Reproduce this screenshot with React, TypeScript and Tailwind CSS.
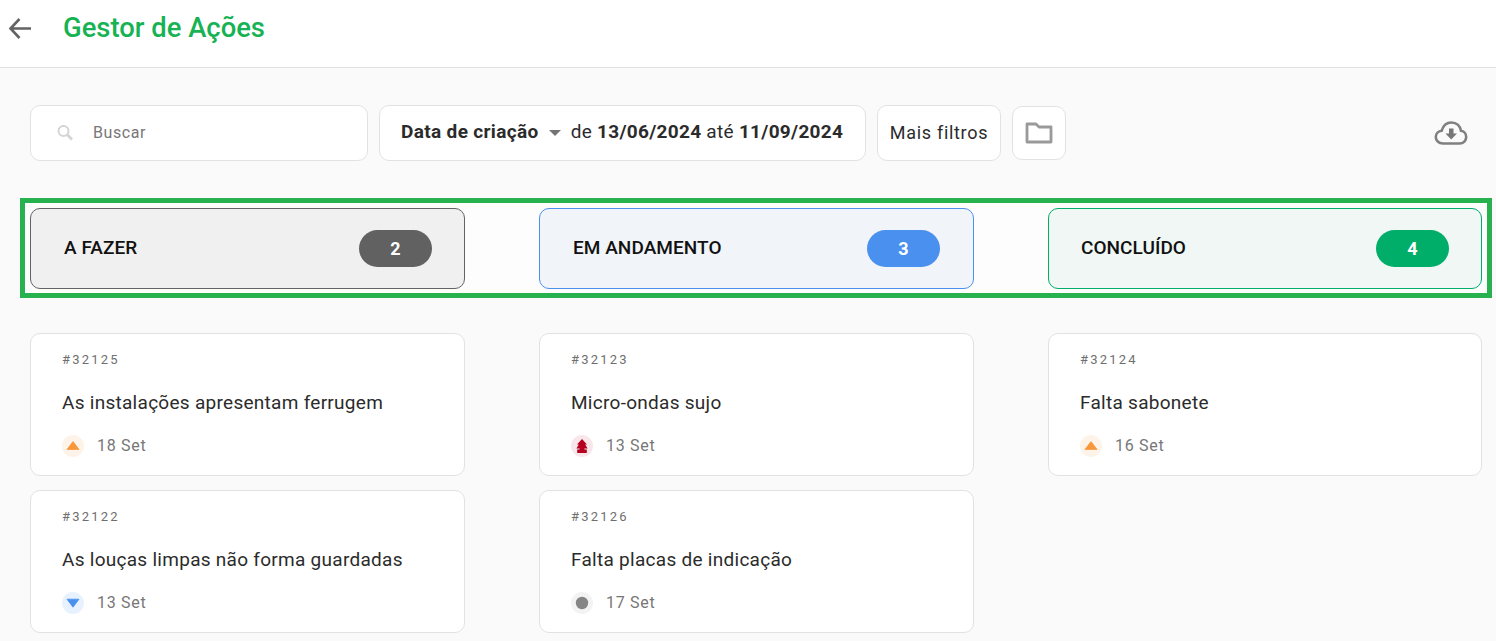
import React from "react";

type P = "up" | "high" | "down" | "none";

function Priority({ kind }: { kind: P }) {
  const bg = kind === "up" ? "bg-[#fef3e8]" : kind === "high" ? "bg-[#f8e7ea]" : kind === "down" ? "bg-[#e8f2fe]" : "bg-[#f3f3f3]";
  return (
    <span className={`flex h-[22px] w-[22px] shrink-0 items-center justify-center rounded-full ${bg}`}>
      <svg width="16" height="16" viewBox="0 0 16 16">
        {kind === "up" && <path d="M8 3.6 14 11.4H2Z" fill="#f7973a" stroke="#f7973a" strokeWidth="0.8" strokeLinejoin="round" />}
        {kind === "down" && <path d="M2 4.2H14L8 12.2Z" fill="#4a90ee" stroke="#4a90ee" strokeWidth="0.8" strokeLinejoin="round" />}
        {kind === "none" && <circle cx="8" cy="8" r="6.2" fill="#858585" />}
        {kind === "high" && (
          <path d="M8 1 13 6.6H11.2L13.6 10.4H10.4V11.4H12.8V15H3.2V11.4H5.6V10.4H2.4L4.8 6.6H3Z" fill="#b5001f" />
        )}
      </svg>
    </span>
  );
}

function Card({ id, title, kind, date }: { id: string; title: string; kind: P; date: string }) {
  return (
    <div className="flex h-[143px] flex-col rounded-[10px] border border-[#e2e2e2] bg-white pl-[31px]">
      <div className="mt-[17px] h-[18px] text-[13px] leading-[18px] tracking-[2.2px] text-[#6f6f6f]">{id}</div>
      <div className="mt-[22px] h-[24px] text-[19px] leading-[24px] tracking-[0.28px] text-[#2b2b2b]">{title}</div>
      <div className="mt-[20px] flex h-[22px] items-center gap-[13px]">
        <Priority kind={kind} />
        <span className="text-[16px] tracking-[0.7px] text-[#777777]">{date}</span>
      </div>
    </div>
  );
}

function Status({ title, n, cls, pill }: { title: string; n: number; cls: string; pill: string }) {
  return (
    <div className={`flex h-[81px] items-center justify-between rounded-[10px] border ${cls}`}>
      <span className="pb-[1px] text-[19px] font-medium tracking-[0.05px] text-[#111111]">{title}</span>
      <span className={`flex h-[37px] w-[73px] items-center justify-center rounded-full text-[18px] font-bold text-white ${pill}`}>{n}</span>
    </div>
  );
}

export default function App() {
  return (
    <div className="h-[641px] overflow-hidden bg-[#fafafa] [font-family:Roboto,'Liberation_Sans',sans-serif]">
      <header className="flex h-[68px] items-center border-b border-[#e0e0e0] bg-white pb-[9px]">
        <svg className="ml-[8px]" width="24" height="24" viewBox="0 0 24 24" fill="none" stroke="#636363" strokeWidth="2.6">
          <path d="M23 11.5H2.5M11.5 2 2.5 11.5l9 9.5" />
        </svg>
        <h1 className="ml-[31px] text-[27.4px] font-medium leading-none text-[#16b253]">Gestor de Ações</h1>
      </header>

      <div className="mt-[37px] flex h-[56px] items-center pl-[30px] pr-[28px]">
        <div className="flex h-[56px] w-[338px] items-center rounded-[10px] border border-[#e2e2e2] bg-white pl-[25px]">
          <svg width="18" height="18" viewBox="0 0 18 18" fill="none" stroke="#d4d4d4" strokeWidth="2">
            <circle cx="7.5" cy="7" r="5" />
            <path d="M11 10.5l5 5" strokeWidth="2.6" />
          </svg>
          <span className="ml-[19px] pb-[1px] text-[16px] tracking-[0.6px] text-[#777777]">Buscar</span>
        </div>
        <div className="ml-[11px] flex h-[56px] w-[487px] items-center rounded-[10px] border border-[#e2e2e2] bg-white pb-[2px] pl-[21px] text-[19px] text-[#2b2b2b]">
          <span className="font-bold tracking-[0.35px]">Data de criação</span>
          <svg className="ml-[10px] mt-[2px]" width="12" height="6" viewBox="0 0 12 6"><path d="M0 0H12L6 6Z" fill="#757575" /></svg>
          <span className="ml-[10px] tracking-[0.3px]">de <b>13/06/2024</b> até <b>11/09/2024</b></span>
        </div>
        <div className="ml-[11px] flex h-[56px] w-[124px] items-center justify-center rounded-[10px] border border-[#e2e2e2] bg-white pb-[2px] text-[18px] tracking-[0.7px] text-[#2b2b2b]">Mais filtros</div>
        <div className="ml-[11px] flex h-[54px] w-[54px] items-center justify-center rounded-[10px] border border-[#e2e2e2] bg-white">
          <svg width="30" height="24" viewBox="0 0 30 24" fill="none" stroke="#9a9a9a" strokeWidth="2.8">
            <path d="M3 3H12L15 6H27V21H3Z" strokeLinejoin="round" />
          </svg>
        </div>
        <svg className="ml-auto" width="34" height="26" viewBox="0 0 34 26">
          <path d="M9 23.5C4.5 23.5 1.8 20.5 1.8 17C1.8 13.5 4.5 11 7.7 10.7C9.2 5.5 13 2.5 17.5 2.5C22.5 2.5 26 6 27 10.7C30 11 32.2 13.7 32.2 17C32.2 20.5 29.5 23.5 25.5 23.5Z" fill="none" stroke="#808080" strokeWidth="2.6" />
          <path d="M15 8.5H19.5V13.5H23L17.2 19.5L11.5 13.5H15Z" fill="#777777" />
        </svg>
      </div>

      <div className="ml-[20px] mr-[4px] mt-[37px] grid h-[100px] grid-cols-[435px_435px_434px] gap-x-[74px] border-[5px] border-[#27b24f] bg-[#fdfdfd] p-[5px]">
        <Status title="A FAZER" n={2} cls="border-[#636363] bg-[#f0f0f0] pl-[33px] pr-[32px]" pill="bg-[#616161]" />
        <Status title="EM ANDAMENTO" n={3} cls="border-[#4a90ee] bg-[#f1f5fa] pl-[33px] pr-[33px]" pill="bg-[#4a90ee]" />
        <Status title="CONCLUÍDO" n={4} cls="border-[#00ad69] bg-[#f0f7f4] pl-[32px] pr-[32px]" pill="bg-[#00ad69]" />
      </div>

      <div className="ml-[30px] mr-[14px] mt-[35px] grid grid-cols-[435px_435px_434px] gap-x-[74px] gap-y-[14px]">
        <Card id="#32125" title="As instalações apresentam ferrugem" kind="up" date="18 Set" />
        <Card id="#32123" title="Micro-ondas sujo" kind="high" date="13 Set" />
        <Card id="#32124" title="Falta sabonete" kind="up" date="16 Set" />
        <Card id="#32122" title="As louças limpas não forma guardadas" kind="down" date="13 Set" />
        <Card id="#32126" title="Falta placas de indicação" kind="none" date="17 Set" />
      </div>
    </div>
  );
}
